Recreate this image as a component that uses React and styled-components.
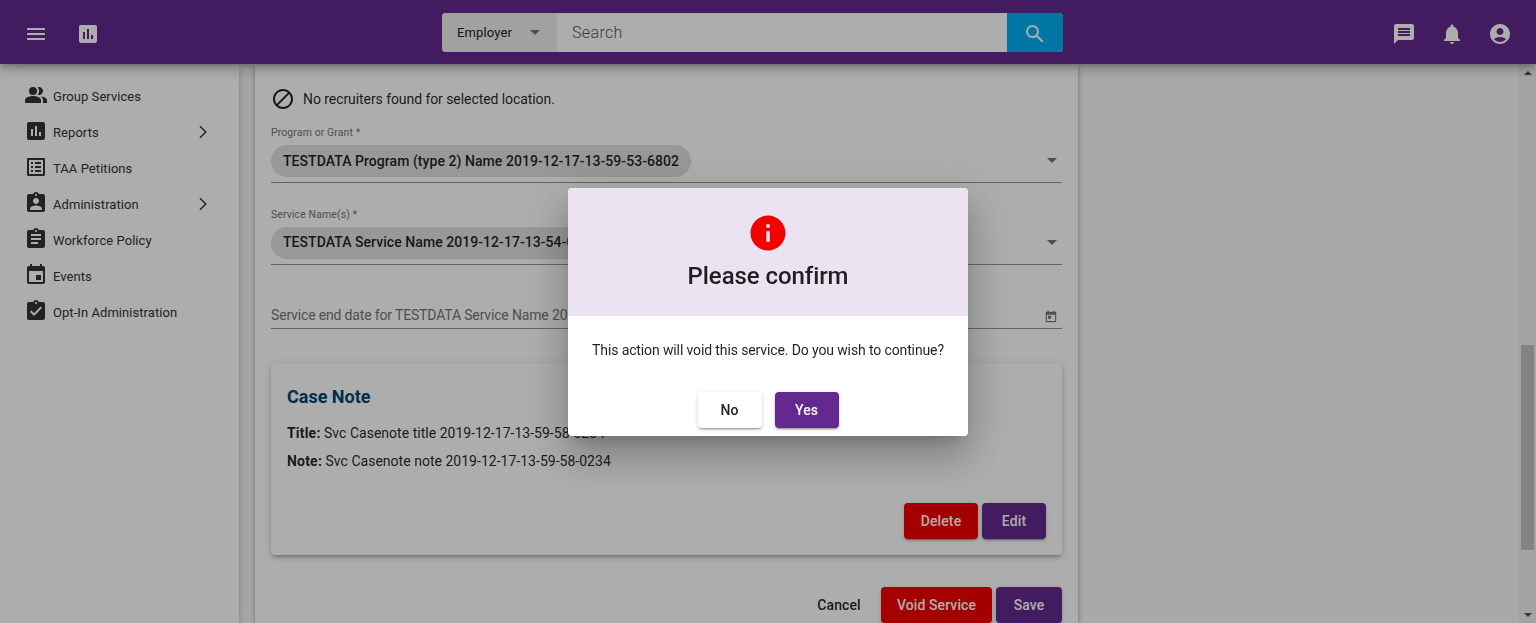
import React from "react";
import styled, { createGlobalStyle } from "styled-components";
import {
  MdMenu, MdAssessment, MdPeopleAlt, MdListAlt, MdAssignmentInd, MdAssignment, MdEvent,
  MdAssignmentTurnedIn, MdSearch, MdMessage, MdNotifications,
  MdAccountCircle, MdBlock, MdToday, MdInfo,
} from "react-icons/md";

const GlobalStyle = createGlobalStyle`
  * { box-sizing: border-box; }
  body {
    margin: 0;
    background: #fafafa;
    color: rgba(0, 0, 0, 0.87);
    font: 400 14px/20px Roboto, "Liberation Sans", sans-serif;
    overflow: hidden;
  }
  svg { display: block; flex: none; }
`;

const Shell = styled.div`
  height: 623px;
  display: flex;
  flex-direction: column;
  overflow: hidden;
`;

const Header = styled.header`
  position: relative;
  z-index: 2;
  flex: none;
  height: 64px;
  display: grid;
  grid-template-columns: 442px 621px 1fr;
  align-items: center;
  padding-top: 1px;
  background: #64288f;
  color: #fff;
  box-shadow: 0 3px 5px -1px rgba(0, 0, 0, 0.2), 0 6px 10px rgba(0, 0, 0, 0.14),
    0 1px 18px rgba(0, 0, 0, 0.12);
`;

const HeaderIcons = styled.div`
  display: flex;
  justify-content: ${(p) => (p.$end ? "flex-end" : "flex-start")};
  gap: ${(p) => p.$gap}px;
  padding: 3px 24px 0;
`;

const SearchBar = styled.div`
  display: flex;
  height: 39px;
  border-radius: 4px;
  overflow: hidden;
  background: #fff;
  font-weight: 300;
`;

const SearchType = styled.div`
  width: 115px;
  padding: 0 17px 0 15px;
  display: flex;
  align-items: center;
  justify-content: space-between;
  background: #eee;
  color: #222;
  font-size: 13px;
  letter-spacing: 0.15px;
  font-weight: 400;
`;

const SearchField = styled.div`
  flex: 1;
  padding: 0 15px;
  font-size: 16px;
  line-height: 39px;
  letter-spacing: 0.35px;
  color: #555;
`;

const SearchButton = styled.div`
  width: 56px;
  display: grid;
  place-items: center;
  padding-top: 2px;
  background: #00aff3;
`;

const Caret = styled.span`
  flex: none;
  border: 5px solid transparent;
  border-top-color: #757575;
  border-bottom: 0;
`;

const Body = styled.div`
  flex: 1;
  min-height: 0;
  display: flex;
`;

const Sidebar = styled.nav`
  width: 239px;
  flex: none;
  padding-top: 14px;
  background: #fff;
  box-shadow: 0 3px 5px -1px rgba(0, 0, 0, 0.2), 0 6px 10px rgba(0, 0, 0, 0.1),
    0 1px 18px rgba(0, 0, 0, 0.08);
`;

const NavItem = styled.div`
  height: 36px;
  display: flex;
  align-items: center;
  gap: 5px;
  padding: 0 24px;
  color: #333;
  font-size: 13px;
  letter-spacing: 0.06px;

  > svg { margin-top: -2px; }
  > svg:last-child:not(:first-child) { margin: 0 0 0 auto; }
`;

const NavText = styled.span`
  padding-top: 1px;
`;

const Content = styled.main`
  flex: 1;
  min-width: 0;
  padding-left: 16px;
`;

const Panel = styled.section`
  width: 823px;
  height: 100%;
  display: flex;
  flex-direction: column;
  padding: 23px 16px 0;
  background: #fff;
  box-shadow: 0 2px 4px -1px rgba(0, 0, 0, 0.2), 0 4px 5px rgba(0, 0, 0, 0.14),
    0 1px 10px rgba(0, 0, 0, 0.12);
`;

const EmptyNotice = styled.div`
  height: 24px;
  display: flex;
  align-items: center;
  gap: 8px;
  letter-spacing: -0.07px;
`;

const Field = styled.div`
  height: ${(p) => p.$height}px;
  margin-top: ${(p) => p.$gap}px;
  border-bottom: 1px solid #949494;
`;

const Label = styled.div`
  height: 20px;
  padding-top: 1px;
  color: #757575;
  font-size: 10.5px;
  line-height: 14px;
  letter-spacing: 0.1px;
`;

const FieldRow = styled.div`
  display: flex;
  align-items: center;
  justify-content: space-between;
  padding-right: 5px;
  color: #757575;

  ${Caret} { margin-bottom: 2px; }
`;

const DateRow = styled(FieldRow)`
  padding-right: 4px;
  letter-spacing: -0.16px;

  svg { margin-top: 4px; }
`;

const Chip = styled.div`
  height: 32px;
  padding: 0 12px;
  border-radius: 16px;
  background: #e0e0e0;
  color: rgba(0, 0, 0, 0.87);
  font-weight: 500;
  line-height: ${(p) => p.$line || 32}px;
  letter-spacing: 0.055px;
`;

const NoteCard = styled.article`
  height: 192px;
  flex: none;
  margin-top: 34px;
  padding: 22px 16px 16px;
  display: flex;
  flex-direction: column;
  border-radius: 4px;
  box-shadow: 0 3px 3px -2px rgba(0, 0, 0, 0.2), 0 3px 4px rgba(0, 0, 0, 0.14),
    0 1px 8px rgba(0, 0, 0, 0.12);
`;

const NoteTitle = styled.h2`
  margin: 0 0 14px;
  color: #004570;
  font-size: 18px;
  font-weight: 700;
  line-height: 24px;
`;

const NoteLine = styled.p`
  margin: 0 0 8px;
  letter-spacing: 0.02px;

  b { letter-spacing: 0.2px; }
`;

const Actions = styled.div`
  display: flex;
  justify-content: ${(p) => (p.$center ? "center" : "flex-end")};
  gap: ${(p) => p.$gap || 4}px;
  margin-top: ${(p) => p.$top || "auto"};
`;

const tones = {
  plain: ["#fff", "rgba(0, 0, 0, 0.87)"],
  danger: ["#f40000", "#fff"],
  primary: ["#64288f", "#fff"],
};

const Button = styled.button`
  width: ${(p) => p.$width}px;
  height: 36px;
  padding: 0;
  border: 0;
  border-radius: 4px;
  background: ${(p) => tones[p.$tone][0]};
  color: ${(p) => tones[p.$tone][1]};
  font: 500 14px/36px Roboto, sans-serif;
  letter-spacing: 0.1px;
  box-shadow: ${(p) =>
    p.$flat
      ? "none"
      : "0 3px 1px -2px rgba(0,0,0,.2), 0 2px 2px rgba(0,0,0,.14), 0 1px 5px rgba(0,0,0,.12)"};
`;

const ScrollTrack = styled.div`
  width: 17px;
  flex: none;
  display: flex;
  flex-direction: column;
  align-items: center;
  padding: 7px 0 6px;
  background: #f1f1f1;
`;

const ScrollArrow = styled.span`
  border: 4px solid transparent;
  ${(p) =>
    p.$up
      ? "border-top: 0; border-bottom-color: #505050;"
      : "border-bottom: 0; border-top-color: #505050; margin-top: auto;"}
`;

const ScrollThumb = styled.div`
  width: 13px;
  height: 205px;
  margin-top: 270px;
  background: #c1c1c1;
`;

const Backdrop = styled.div`
  position: fixed;
  inset: 0;
  z-index: 10;
  display: grid;
  place-items: center;
  background: rgba(0, 0, 0, 0.32);
`;

const Dialog = styled.div`
  width: 400px;
  height: 248px;
  margin-bottom: -1px;
  border-radius: 4px;
  overflow: hidden;
  background: #fff;
  box-shadow: 0 11px 15px -7px rgba(0, 0, 0, 0.2), 0 24px 38px 3px rgba(0, 0, 0, 0.14),
    0 9px 46px 8px rgba(0, 0, 0, 0.12);
`;

const DialogHead = styled.div`
  height: 128px;
  padding-top: 24px;
  display: flex;
  flex-direction: column;
  align-items: center;
  background: #ece3f2;

  svg { color: #f40000; }
`;

const DialogTitle = styled.h1`
  margin: 6px 0 0;
  font-size: 24px;
  font-weight: 500;
  line-height: 32px;
  letter-spacing: -0.07px;
`;

const DialogText = styled.p`
  margin: 24px 0 0;
  text-align: center;
  white-space: nowrap;
  letter-spacing: -0.12px;
`;

const Chevron = () => (
  <svg width="24" height="24" viewBox="0 0 24 24" fill="none" stroke="currentColor" strokeWidth="1.5">
    <path d="M9 6.2l5.8 5.8L9 17.8" />
  </svg>
);

const navItems = [
  [MdPeopleAlt, "Group Services"],
  [MdAssessment, "Reports", true],
  [MdListAlt, "TAA Petitions"],
  [MdAssignmentInd, "Administration", true],
  [MdAssignment, "Workforce Policy"],
  [MdEvent, "Events"],
  [MdAssignmentTurnedIn, "Opt-In Administration"],
];

export default function App() {
  return (
    <>
      <GlobalStyle />
      <Shell>
        <Header>
          <HeaderIcons $gap={28}>
            <MdMenu size={24} />
            <MdAssessment size={24} />
          </HeaderIcons>
          <SearchBar>
            <SearchType>Employer <Caret /></SearchType>
            <SearchField>Search</SearchField>
            <SearchButton><MdSearch size={24} /></SearchButton>
          </SearchBar>
          <HeaderIcons $end $gap={24}>
            <MdMessage size={24} />
            <MdNotifications size={24} />
            <MdAccountCircle size={24} />
          </HeaderIcons>
        </Header>
        <Body>
          <Sidebar>
            {navItems.map(([Icon, text, more]) => (
              <NavItem key={text}>
                <Icon size={24} />
                <NavText>{text}</NavText>
                {more && <Chevron />}
              </NavItem>
            ))}
          </Sidebar>
          <Content>
            <Panel>
              <EmptyNotice>
                <MdBlock size={24} />
                No recruiters found for selected location.
              </EmptyNotice>
              <Field $height={58} $gap={14}>
                <Label>Program or Grant *</Label>
                <FieldRow>
                  <Chip>TESTDATA Program (type 2) Name 2019-12-17-13-59-53-6802</Chip>
                  <Caret />
                </FieldRow>
              </Field>
              <Field $height={58} $gap={24}>
                <Label>Service Name(s) *</Label>
                <FieldRow>
                  <Chip $line={30}>TESTDATA Service Name 2019-12-17-13-54-06-1482</Chip>
                  <Caret />
                </FieldRow>
              </Field>
              <Field $height={24} $gap={40}>
                <DateRow>
                  Service end date for TESTDATA Service Name 2019-12-17-13-54-06-1482
                  <MdToday size={14} />
                </DateRow>
              </Field>
              <NoteCard>
                <NoteTitle>Case Note</NoteTitle>
                <NoteLine><b>Title:</b> Svc Casenote title 2019-12-17-13-59-58-0234</NoteLine>
                <NoteLine><b>Note:</b> Svc Casenote note 2019-12-17-13-59-58-0234</NoteLine>
                <Actions>
                  <Button $tone="danger" $width={74}>Delete</Button>
                  <Button $tone="primary" $width={64}>Edit</Button>
                </Actions>
              </NoteCard>
              <Actions $top="32px">
                <Button $tone="plain" $width={76} $flat>Cancel</Button>
                <Button $tone="danger" $width={111}>Void Service</Button>
                <Button $tone="primary" $width={66}>Save</Button>
              </Actions>
            </Panel>
          </Content>
          <ScrollTrack>
            <ScrollArrow $up />
            <ScrollThumb />
            <ScrollArrow />
          </ScrollTrack>
        </Body>
      </Shell>
      <Backdrop>
        <Dialog role="dialog">
          <DialogHead>
            <MdInfo size={42} />
            <DialogTitle>Please confirm</DialogTitle>
          </DialogHead>
          <DialogText>This action will void this service. Do you wish to continue?</DialogText>
          <Actions $center $gap={13} $top="32px">
            <Button $tone="plain" $width={64}>No</Button>
            <Button $tone="primary" $width={64}>Yes</Button>
          </Actions>
        </Dialog>
      </Backdrop>
    </>
  );
}
